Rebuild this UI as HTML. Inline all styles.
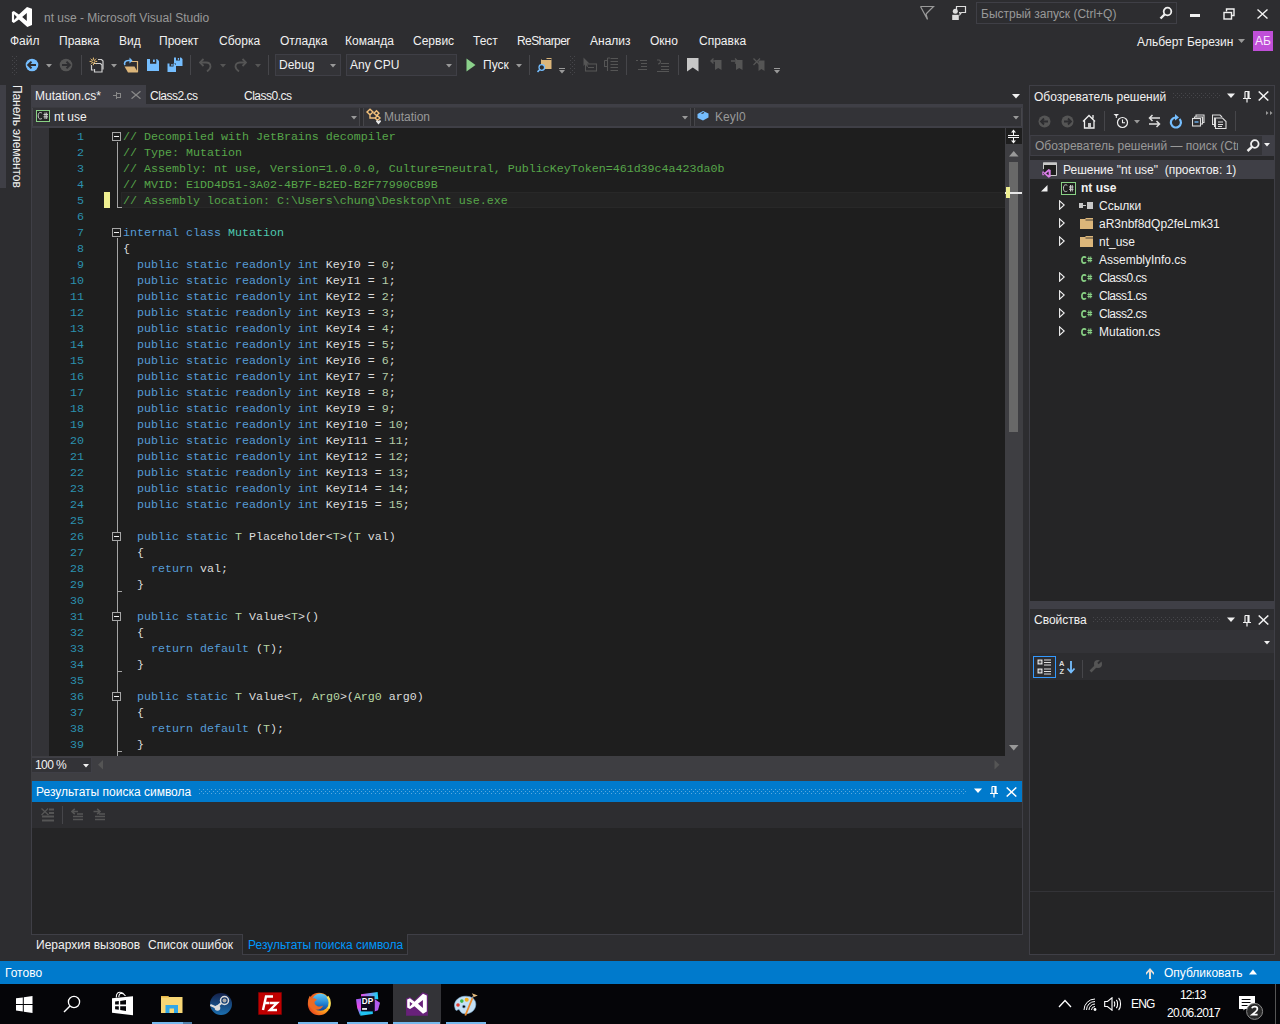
<!DOCTYPE html><html><head><meta charset="utf-8"><style>
*{margin:0;padding:0;box-sizing:border-box}
body{width:1280px;height:1024px;background:#2D2D30;position:relative;overflow:hidden;font-family:"Liberation Sans",sans-serif;font-size:12px;color:#F1F1F1}
body div, body svg{position:absolute}
.m{font-family:"Liberation Mono",monospace}
</style></head><body>
<svg style="left:8px;top:4px" width="28" height="26" viewBox="0 0 28 26"><path fill-rule="evenodd" fill="#fff" d="M19 2.9 L24 4.8 V21.1 L19.3 23 L10.9 15.5 L5.8 18.9 L3.9 17.8 V8.1 L5.8 6.9 L10.9 10.4 Z M14.2 12.9 L18.8 8.9 V17 Z M6.1 10.2 V16 L8.9 13.1 Z"/></svg>
<div style="left:44px;top:10px;color:#999999;font-size:12px;line-height:16px;white-space:pre;">nt use - Microsoft Visual Studio</div>
<svg style="left:919px;top:5px" width="16" height="16" viewBox="0 0 16 16"><path d="M1.5 1.5 H14.5 L7 9 M1.5 1.5 L8.5 14.5 M7 9 L8.5 14.5" stroke="#999" stroke-width="1.2" fill="none"/></svg>
<svg style="left:950px;top:4px" width="18" height="18" viewBox="0 0 18 18"><path d="M6.5 6 V2.5 H15.5 V8.5 H11.5 L10 10.5 V8.5 H9" stroke="#ddd" stroke-width="1.2" fill="none"/><circle cx="5.3" cy="7.3" r="2.5" fill="#ddd"/><rect x="2.2" y="10.8" width="6.6" height="5.2" fill="#ddd"/></svg>
<div style="left:976px;top:2px;width:201px;height:22px;background:#2D2D30;border:1px solid #3F3F46"></div>
<div style="left:981px;top:6px;color:#999999;font-size:12px;line-height:16px;white-space:pre;">Быстрый запуск (Ctrl+Q)</div>
<svg style="left:1159px;top:6px" width="14" height="14" viewBox="0 0 14 14"><circle cx="8.5" cy="5.5" r="3.8" stroke="#eee" stroke-width="1.8" fill="none"/><path d="M6 8 L1.5 12.5" stroke="#eee" stroke-width="2.4"/></svg>
<div style="left:1190px;top:14px;width:10px;height:3px;background:#F1F1F1;"></div>
<svg style="left:1223px;top:8px" width="12" height="12" viewBox="0 0 12 12"><path d="M3.5 3.5 V1 H11 V7.5 H8.5" stroke="#f1f1f1" stroke-width="1.4" fill="none"/><rect x="1" y="4.5" width="7.5" height="6.5" stroke="#f1f1f1" stroke-width="1.4" fill="none"/></svg>
<svg style="left:1257px;top:9px" width="11" height="10" viewBox="0 0 11 10"><path d="M0.5 0.5 L10.5 9.5 M10.5 0.5 L0.5 9.5" stroke="#f1f1f1" stroke-width="1.4"/></svg>
<div style="left:10px;top:33px;color:#F1F1F1;font-size:12px;line-height:16px;white-space:pre;">Файл</div>
<div style="left:59px;top:33px;color:#F1F1F1;font-size:12px;line-height:16px;white-space:pre;">Правка</div>
<div style="left:119px;top:33px;color:#F1F1F1;font-size:12px;line-height:16px;white-space:pre;">Вид</div>
<div style="left:159px;top:33px;color:#F1F1F1;font-size:12px;line-height:16px;white-space:pre;">Проект</div>
<div style="left:219px;top:33px;color:#F1F1F1;font-size:12px;line-height:16px;white-space:pre;">Сборка</div>
<div style="left:280px;top:33px;color:#F1F1F1;font-size:12px;line-height:16px;white-space:pre;">Отладка</div>
<div style="left:345px;top:33px;color:#F1F1F1;font-size:12px;line-height:16px;white-space:pre;">Команда</div>
<div style="left:413px;top:33px;color:#F1F1F1;font-size:12px;line-height:16px;white-space:pre;">Сервис</div>
<div style="left:473px;top:33px;color:#F1F1F1;font-size:12px;line-height:16px;white-space:pre;">Тест</div>
<div style="left:517px;top:33px;color:#F1F1F1;font-size:12px;line-height:16px;white-space:pre;letter-spacing:-0.6px">ReSharper</div>
<div style="left:590px;top:33px;color:#F1F1F1;font-size:12px;line-height:16px;white-space:pre;">Анализ</div>
<div style="left:650px;top:33px;color:#F1F1F1;font-size:12px;line-height:16px;white-space:pre;">Окно</div>
<div style="left:699px;top:33px;color:#F1F1F1;font-size:12px;line-height:16px;white-space:pre;">Справка</div>
<div style="left:1137px;top:34px;color:#F1F1F1;font-size:12px;line-height:16px;white-space:pre;">Альберт Березин</div>
<svg style="left:1238px;top:39px" width="8" height="5"><path d="M0 0 H7 L3.5 4Z" fill="#999"/></svg>
<div style="left:1253px;top:31px;width:20px;height:20px;background:#C04FD8;"></div>
<div style="left:1255px;top:33px;color:#F8E8FC;font-size:12px;line-height:16px;white-space:pre;">АБ</div>
<div style="left:12px;top:56px;width:1px;height:1px;background:#46464A;"></div>
<div style="left:16px;top:56px;width:1px;height:1px;background:#46464A;"></div>
<div style="left:14px;top:58px;width:1px;height:1px;background:#46464A;"></div>
<div style="left:12px;top:60px;width:1px;height:1px;background:#46464A;"></div>
<div style="left:16px;top:60px;width:1px;height:1px;background:#46464A;"></div>
<div style="left:14px;top:62px;width:1px;height:1px;background:#46464A;"></div>
<div style="left:12px;top:64px;width:1px;height:1px;background:#46464A;"></div>
<div style="left:16px;top:64px;width:1px;height:1px;background:#46464A;"></div>
<div style="left:14px;top:66px;width:1px;height:1px;background:#46464A;"></div>
<div style="left:12px;top:68px;width:1px;height:1px;background:#46464A;"></div>
<div style="left:16px;top:68px;width:1px;height:1px;background:#46464A;"></div>
<div style="left:14px;top:70px;width:1px;height:1px;background:#46464A;"></div>
<div style="left:12px;top:72px;width:1px;height:1px;background:#46464A;"></div>
<div style="left:16px;top:72px;width:1px;height:1px;background:#46464A;"></div>
<div style="left:14px;top:74px;width:1px;height:1px;background:#46464A;"></div>
<svg style="left:25px;top:58px" width="14" height="14" viewBox="0 0 14 14"><circle cx="7" cy="7" r="6.3" fill="#75BEFF"/><path d="M3 7 H11 M6.5 3.6 L3.2 7 L6.5 10.4" stroke="#2D2D30" stroke-width="2" fill="none"/></svg>
<svg style="left:46px;top:64px" width="7" height="4"><path d="M0 0 H6 L3 3.5Z" fill="#999"/></svg>
<svg style="left:59px;top:58px" width="14" height="14" viewBox="0 0 14 14"><circle cx="7" cy="7" r="6.3" fill="#555"/><path d="M3 7 H11 M7.5 3.6 L10.8 7 L7.5 10.4" stroke="#2D2D30" stroke-width="2" fill="none"/></svg>
<div style="left:81px;top:55px;width:1px;height:20px;background:#46464A;"></div>
<svg style="left:86px;top:54px" width="20" height="20" viewBox="0 0 20 20"><path d="M12 5.5 H15.5 L17 7 V15.5" stroke="#D0D0D0" stroke-width="1.2" fill="none"/><path d="M8 9.5 H14.5 L16 11 V18 H8.5 V15" stroke="#D0D0D0" stroke-width="1.2" fill="none"/><path d="M5.5 11 V16 H7.5" stroke="#D0D0D0" stroke-width="1.2" fill="none"/><circle cx="7.4" cy="7.4" r="1.6" fill="none" stroke="#F5C878" stroke-width="1"/><path d="M7.4 3.6 V5.2 M7.4 9.6 V11.2 M3.6 7.4 H5.2 M9.6 7.4 H11.2 M4.7 4.7 L5.8 5.8 M9 9 L10.1 10.1 M10.1 4.7 L9 5.8 M5.8 9 L4.7 10.1" stroke="#F5C878" stroke-width="1"/></svg>
<svg style="left:111px;top:64px" width="7" height="4"><path d="M0 0 H6 L3 3.5Z" fill="#999"/></svg>
<svg style="left:122px;top:56px" width="18" height="18" viewBox="0 0 18 18"><path d="M9 5.5 H15.5 V16" stroke="#DCB67A" stroke-width="1.2" fill="none"/><path d="M2.5 10.5 H12.5 L16 16.5 H6 Z" fill="#DCB67A"/><path d="M3 9 C1.8 7 3 4.5 6.5 4.5 H8" stroke="#75BEFF" stroke-width="1.6" fill="none"/><path d="M7.5 1.5 L10.5 4.5 L7.5 7.5Z" fill="#75BEFF"/></svg>
<svg style="left:147px;top:59px" width="13" height="13" viewBox="0 0 13 13"><path fill-rule="evenodd" d="M0 0 H10 L12 2 V12 H0 Z M3 0 V4.8 H9.3 V0 Z" fill="#75BEFF"/><rect x="6" y="0.6" width="1.8" height="2.4" fill="#75BEFF"/></svg>
<svg style="left:167px;top:57px" width="16" height="16" viewBox="0 0 16 16"><path fill-rule="evenodd" d="M7 0.5 H14 L15.5 2 V9 H9 V6.5 H7 Z M9 0.5 V3.5 H13 V0.5 Z" fill="#75BEFF"/><rect x="10.8" y="1" width="1.3" height="1.8" fill="#75BEFF"/><path fill-rule="evenodd" d="M0.5 6.5 H7.5 L9 8 V15 H0.5 Z M2.5 6.5 V9.5 H6.5 V6.5 Z" fill="#75BEFF"/><rect x="4.3" y="7" width="1.3" height="1.8" fill="#75BEFF"/></svg>
<div style="left:190px;top:55px;width:1px;height:20px;background:#46464A;"></div>
<svg style="left:199px;top:58px" width="13" height="14" viewBox="0 0 13 14"><path d="M1.5 4.5 H7 C10 4.5 11.5 6.5 11.5 8.5 C11.5 10.5 10.5 11.5 8 13.5" stroke="#555" stroke-width="1.8" fill="none"/><path d="M4.5 1 L1 4.5 L4.5 8" stroke="#555" stroke-width="1.8" fill="none"/></svg>
<svg style="left:220px;top:64px" width="7" height="4"><path d="M0 0 H6 L3 3.5Z" fill="#555"/></svg>
<svg style="left:234px;top:58px" width="13" height="14" viewBox="0 0 13 14"><path d="M11.5 4.5 H6 C3 4.5 1.5 6.5 1.5 8.5 C1.5 10.5 2.5 11.5 5 13.5" stroke="#555" stroke-width="1.8" fill="none"/><path d="M8.5 1 L12 4.5 L8.5 8" stroke="#555" stroke-width="1.8" fill="none"/></svg>
<svg style="left:255px;top:64px" width="7" height="4"><path d="M0 0 H6 L3 3.5Z" fill="#555"/></svg>
<div style="left:268px;top:55px;width:1px;height:20px;background:#46464A;"></div>
<div style="left:275px;top:54px;width:66px;height:22px;background:#333337;border:1px solid #3F3F46"></div>
<div style="left:279px;top:57px;color:#F1F1F1;font-size:12px;line-height:16px;white-space:pre;">Debug</div>
<svg style="left:330px;top:64px" width="7" height="4"><path d="M0 0 H6 L3 3.5Z" fill="#999"/></svg>
<div style="left:346px;top:54px;width:111px;height:22px;background:#333337;border:1px solid #3F3F46"></div>
<div style="left:350px;top:57px;color:#F1F1F1;font-size:12px;line-height:16px;white-space:pre;">Any CPU</div>
<svg style="left:446px;top:64px" width="7" height="4"><path d="M0 0 H6 L3 3.5Z" fill="#999"/></svg>
<svg style="left:466px;top:58px" width="10" height="14"><path d="M0.5 0.5 L9.5 7 L0.5 13.5Z" fill="#8BD18B"/></svg>
<div style="left:483px;top:57px;color:#F1F1F1;font-size:12px;line-height:16px;white-space:pre;">Пуск</div>
<svg style="left:516px;top:64px" width="7" height="4"><path d="M0 0 H6 L3 3.5Z" fill="#999"/></svg>
<div style="left:529px;top:55px;width:1px;height:20px;background:#46464A;"></div>
<svg style="left:537px;top:57px" width="16" height="17" viewBox="0 0 16 17"><path d="M4 2 H9 L10 1 H14.5 V12 H4 Z" fill="#DCB67A"/><path d="M4.5 2.5 H14.5" stroke="#2D2D30" stroke-width="1"/><circle cx="4.8" cy="10.5" r="2.8" stroke="#75BEFF" stroke-width="1.3" fill="#2D2D30"/><path d="M2.8 12.5 L0.5 15" stroke="#75BEFF" stroke-width="1.6"/></svg>
<div style="left:559px;top:68px;width:6px;height:1px;background:#999;"></div>
<svg style="left:559px;top:70px" width="7" height="4"><path d="M0 0 H6 L3 3.5Z" fill="#999"/></svg>
<div style="left:570px;top:56px;width:1px;height:1px;background:#46464A;"></div>
<div style="left:574px;top:56px;width:1px;height:1px;background:#46464A;"></div>
<div style="left:572px;top:58px;width:1px;height:1px;background:#46464A;"></div>
<div style="left:570px;top:60px;width:1px;height:1px;background:#46464A;"></div>
<div style="left:574px;top:60px;width:1px;height:1px;background:#46464A;"></div>
<div style="left:572px;top:62px;width:1px;height:1px;background:#46464A;"></div>
<div style="left:570px;top:64px;width:1px;height:1px;background:#46464A;"></div>
<div style="left:574px;top:64px;width:1px;height:1px;background:#46464A;"></div>
<div style="left:572px;top:66px;width:1px;height:1px;background:#46464A;"></div>
<div style="left:570px;top:68px;width:1px;height:1px;background:#46464A;"></div>
<div style="left:574px;top:68px;width:1px;height:1px;background:#46464A;"></div>
<div style="left:572px;top:70px;width:1px;height:1px;background:#46464A;"></div>
<div style="left:570px;top:72px;width:1px;height:1px;background:#46464A;"></div>
<div style="left:574px;top:72px;width:1px;height:1px;background:#46464A;"></div>
<div style="left:572px;top:74px;width:1px;height:1px;background:#46464A;"></div>
<svg style="left:583px;top:57px" width="15" height="15" viewBox="0 0 15 15"><path d="M0.5 0.5 V9 L2.5 7 L4 10 L5.2 9.4 L3.8 6.5 H6.5 Z" fill="#555"/><rect x="2.5" y="7" width="11" height="7" stroke="#555" stroke-width="1.1" fill="none"/><path d="M5 10.5 H11" stroke="#555" stroke-width="1.1"/></svg>
<svg style="left:604px;top:57px" width="15" height="15" viewBox="0 0 15 15"><path d="M3.5 1 V14 M0.5 3.5 V9.5 H3 M0.5 3.5 H3 M6.5 1.5 H14 M6.5 4.5 H14 M6.5 7.5 H14 M6.5 10.5 H14 M6.5 13.5 H14 M3.5 1 H6" stroke="#555" stroke-width="1.1" fill="none"/></svg>
<div style="left:626px;top:55px;width:1px;height:20px;background:#46464A;"></div>
<svg style="left:636px;top:59px" width="12" height="12" viewBox="0 0 12 12"><path d="M0 1.5 H2 M4 1.5 H11 M5 4.5 H11 M5 7.5 H11 M2 10.5 H11" stroke="#555" stroke-width="1.1"/></svg>
<svg style="left:656px;top:58px" width="14" height="14" viewBox="0 0 14 14"><path d="M1 2 H3 C5 2 5 6 2 6 M5 5.5 H13 M5 8.5 H13 M5 11.5 H13 M1 13.5 H13" stroke="#555" stroke-width="1.2" fill="none"/></svg>
<div style="left:678px;top:55px;width:1px;height:20px;background:#46464A;"></div>
<svg style="left:687px;top:58px" width="12" height="14" viewBox="0 0 12 14"><path d="M0 0 H11.5 V13.5 L5.75 9.5 L0 13.5 Z" fill="#C8C8C8"/></svg>
<svg style="left:710px;top:58px" width="12" height="14" viewBox="0 0 12 14"><path d="M5 2 H11.5 V12 L8.2 10 L5 12 Z" fill="#555"/><path d="M0.5 3 H7 M3.5 0.5 L1 3 L3.5 5.5" stroke="#555" stroke-width="1.3" fill="none"/></svg>
<svg style="left:731px;top:58px" width="12" height="14" viewBox="0 0 12 14"><path d="M5 2 H11.5 V12 L8.2 10 L5 12 Z" fill="#555"/><path d="M0 3 H6.5 M4 0.5 L6.5 3 L4 5.5" stroke="#555" stroke-width="1.3" fill="none"/></svg>
<svg style="left:753px;top:58px" width="12" height="14" viewBox="0 0 12 14"><path d="M5.5 2.5 H11.5 V13 L8.5 11 L5.5 13 Z" fill="#555"/><path d="M0.5 0.5 L7 7 M7 0.5 L0.5 7" stroke="#555" stroke-width="1.3"/></svg>
<div style="left:774px;top:68px;width:6px;height:1px;background:#999;"></div>
<svg style="left:774px;top:70px" width="7" height="4"><path d="M0 0 H6 L3 3.5Z" fill="#999"/></svg>
<div style="left:0px;top:85px;width:6px;height:103px;background:#3F3F46;"></div>
<div style="left:9px;top:85px;width:16px;height:102px;"><div style="left:0;top:0;width:102px;height:16px;line-height:16px;transform-origin:0 0;transform:translate(16px,0) rotate(90deg);white-space:nowrap;letter-spacing:-0.1px;color:#F1F1F1">Панель элементов</div></div>
<div style="left:31px;top:104px;width:1px;height:831px;background:#3F3F46;"></div>
<div style="left:31px;top:85px;width:115px;height:19px;background:#3F3F46;"></div>
<div style="left:35px;top:88px;color:#F1F1F1;font-size:12px;line-height:16px;white-space:pre;">Mutation.cs*</div>
<div style="left:113px;top:95px;width:3px;height:1px;background:#888;"></div>
<div style="left:116px;top:92px;width:1px;height:7px;background:#888;"></div>
<div style="left:117px;top:93px;width:4px;height:1px;background:#888;"></div>
<div style="left:117px;top:97px;width:4px;height:1px;background:#888;"></div>
<div style="left:120px;top:93px;width:1px;height:5px;background:#888;"></div>
<svg style="left:131px;top:91px" width="10" height="8" viewBox="0 0 10 8"><path d="M0.5 0.3 L9.5 7.7 M9.5 0.3 L0.5 7.7" stroke="#888" stroke-width="1.3"/></svg>
<div style="left:150px;top:88px;color:#F1F1F1;font-size:12px;line-height:16px;white-space:pre;letter-spacing:-0.5px">Class2.cs</div>
<div style="left:244px;top:88px;color:#F1F1F1;font-size:12px;line-height:16px;white-space:pre;letter-spacing:-0.5px">Class0.cs</div>
<svg style="left:1012px;top:94px" width="9" height="5"><path d="M0 0 H8 L4 4.5Z" fill="#F1F1F1"/></svg>
<div style="left:31px;top:104px;width:992px;height:24px;background:#3F3F46;"></div>
<div style="left:32px;top:107px;width:328px;height:19px;background:#333337;"></div>
<div style="left:363px;top:107px;width:328px;height:19px;background:#333337;"></div>
<div style="left:694px;top:107px;width:328px;height:19px;background:#333337;"></div>
<div style="left:359px;top:107px;width:1px;height:19px;background:#46464A;"></div>
<div style="left:360px;top:107px;width:3px;height:19px;background:#2D2D30;"></div>
<div style="left:363px;top:107px;width:1px;height:19px;background:#46464A;"></div>
<div style="left:690px;top:107px;width:1px;height:19px;background:#46464A;"></div>
<div style="left:691px;top:107px;width:3px;height:19px;background:#2D2D30;"></div>
<div style="left:694px;top:107px;width:1px;height:19px;background:#46464A;"></div>
<div style="left:1021px;top:107px;width:1px;height:19px;background:#46464A;"></div>
<div style="left:32px;top:107px;width:1px;height:19px;background:#46464A;"></div>
<div style="left:32px;top:107px;width:990px;height:1px;background:#3A3A3F;"></div>
<svg style="left:36px;top:110px" width="14" height="12" viewBox="0 0 14 12"><rect x="0.5" y="0.5" width="13" height="11" stroke="#89D185" fill="#252526"/><path d="M6 3.2 C5.5 2.7 5 2.5 4.3 2.5 C3 2.5 2.2 3.6 2.2 5.8 C2.2 8 3 9 4.3 9 C5 9 5.5 8.8 6 8.4" stroke="#ccc" stroke-width="1" fill="none"/><path d="M7.5 4.5 H12 M7.5 6.8 H12 M9 2.5 V9 M10.7 2.5 V9" stroke="#ccc" stroke-width="1"/></svg>
<div style="left:54px;top:109px;color:#F1F1F1;font-size:12px;line-height:16px;white-space:pre;">nt use</div>
<svg style="left:351px;top:116px" width="7" height="4"><path d="M0 0 H6 L3 3.5Z" fill="#999"/></svg>
<svg style="left:365px;top:108px" width="18" height="17" viewBox="0 0 18 17"><path d="M2 4 L5 1.2 L8 4 L5 6.8Z M9 5.2 L11.5 2.8 L14 5.2 L11.5 7.6Z M10 10 L12.5 7.8 L15 10 L12.5 12.2Z M5 6.8 V10 H10" stroke="#F2C07A" stroke-width="1.4" fill="#333337"/><path d="M11 13.5 C11 12 12.8 11.8 13.5 13 C14.2 11.8 16 12 16 13.5 L13.5 16.5Z" fill="#E8E8E8"/></svg>
<div style="left:384px;top:109px;color:#999999;font-size:12px;line-height:16px;white-space:pre;">Mutation</div>
<svg style="left:682px;top:116px" width="7" height="4"><path d="M0 0 H6 L3 3.5Z" fill="#999"/></svg>
<svg style="left:697px;top:110px" width="12" height="11" viewBox="0 0 12 11"><path d="M0.5 4 L6 1 L11.5 3.5 V7.5 L6 10.5 L0.5 8 Z" fill="#75BEFF"/><path d="M4.5 3.5 L7 2.5" stroke="#2D2D30" stroke-width="1.3"/></svg>
<div style="left:715px;top:109px;color:#999999;font-size:12px;line-height:16px;white-space:pre;">KeyI0</div>
<svg style="left:1013px;top:116px" width="7" height="4"><path d="M0 0 H6 L3 3.5Z" fill="#999"/></svg>
<div style="left:32px;top:128px;width:17px;height:628px;background:#333337;"></div>
<div style="left:49px;top:128px;width:956px;height:628px;background:#1E1E1E;"></div>
<div style="left:121px;top:192px;width:884px;height:16px;background:#232323;border:1px solid #282828;border-right:none"></div>
<div style="left:104px;top:192px;width:6px;height:16px;background:#EFEF91;"></div>
<div class="m" style="left:49px;top:128px;width:956px;height:628px;overflow:hidden;font-size:11.67px;line-height:16px"><div style="left:0;top:1px;width:956px;height:640px">
<div style="left:0;top:0px;width:35px;text-align:right;color:#2B91AF">1</div>
<div style="left:74px;top:0px;white-space:pre"><span style="color:#57A64A">// Decompiled with JetBrains decompiler</span></div>
<div style="left:0;top:16px;width:35px;text-align:right;color:#2B91AF">2</div>
<div style="left:74px;top:16px;white-space:pre"><span style="color:#57A64A">// Type: Mutation</span></div>
<div style="left:0;top:32px;width:35px;text-align:right;color:#2B91AF">3</div>
<div style="left:74px;top:32px;white-space:pre"><span style="color:#57A64A">// Assembly: nt use, Version=1.0.0.0, Culture=neutral, PublicKeyToken=461d39c4a423da0b</span></div>
<div style="left:0;top:48px;width:35px;text-align:right;color:#2B91AF">4</div>
<div style="left:74px;top:48px;white-space:pre"><span style="color:#57A64A">// MVID: E1DD4D51-3A02-4B7F-B2ED-B2F77990CB9B</span></div>
<div style="left:0;top:64px;width:35px;text-align:right;color:#2B91AF">5</div>
<div style="left:74px;top:64px;white-space:pre"><span style="color:#57A64A">// Assembly location: C:\Users\chung\Desktop\nt use.exe</span></div>
<div style="left:0;top:80px;width:35px;text-align:right;color:#2B91AF">6</div>
<div style="left:0;top:96px;width:35px;text-align:right;color:#2B91AF">7</div>
<div style="left:74px;top:96px;white-space:pre"><span style="color:#569CD6">internal class </span><span style="color:#4EC9B0">Mutation</span></div>
<div style="left:0;top:112px;width:35px;text-align:right;color:#2B91AF">8</div>
<div style="left:74px;top:112px;white-space:pre"><span style="color:#DCDCDC">{</span></div>
<div style="left:0;top:128px;width:35px;text-align:right;color:#2B91AF">9</div>
<div style="left:74px;top:128px;white-space:pre"><span style="color:#569CD6">  public static readonly int </span><span style="color:#DCDCDC">KeyI0 = </span><span style="color:#B5CEA8">0</span><span style="color:#DCDCDC">;</span></div>
<div style="left:0;top:144px;width:35px;text-align:right;color:#2B91AF">10</div>
<div style="left:74px;top:144px;white-space:pre"><span style="color:#569CD6">  public static readonly int </span><span style="color:#DCDCDC">KeyI1 = </span><span style="color:#B5CEA8">1</span><span style="color:#DCDCDC">;</span></div>
<div style="left:0;top:160px;width:35px;text-align:right;color:#2B91AF">11</div>
<div style="left:74px;top:160px;white-space:pre"><span style="color:#569CD6">  public static readonly int </span><span style="color:#DCDCDC">KeyI2 = </span><span style="color:#B5CEA8">2</span><span style="color:#DCDCDC">;</span></div>
<div style="left:0;top:176px;width:35px;text-align:right;color:#2B91AF">12</div>
<div style="left:74px;top:176px;white-space:pre"><span style="color:#569CD6">  public static readonly int </span><span style="color:#DCDCDC">KeyI3 = </span><span style="color:#B5CEA8">3</span><span style="color:#DCDCDC">;</span></div>
<div style="left:0;top:192px;width:35px;text-align:right;color:#2B91AF">13</div>
<div style="left:74px;top:192px;white-space:pre"><span style="color:#569CD6">  public static readonly int </span><span style="color:#DCDCDC">KeyI4 = </span><span style="color:#B5CEA8">4</span><span style="color:#DCDCDC">;</span></div>
<div style="left:0;top:208px;width:35px;text-align:right;color:#2B91AF">14</div>
<div style="left:74px;top:208px;white-space:pre"><span style="color:#569CD6">  public static readonly int </span><span style="color:#DCDCDC">KeyI5 = </span><span style="color:#B5CEA8">5</span><span style="color:#DCDCDC">;</span></div>
<div style="left:0;top:224px;width:35px;text-align:right;color:#2B91AF">15</div>
<div style="left:74px;top:224px;white-space:pre"><span style="color:#569CD6">  public static readonly int </span><span style="color:#DCDCDC">KeyI6 = </span><span style="color:#B5CEA8">6</span><span style="color:#DCDCDC">;</span></div>
<div style="left:0;top:240px;width:35px;text-align:right;color:#2B91AF">16</div>
<div style="left:74px;top:240px;white-space:pre"><span style="color:#569CD6">  public static readonly int </span><span style="color:#DCDCDC">KeyI7 = </span><span style="color:#B5CEA8">7</span><span style="color:#DCDCDC">;</span></div>
<div style="left:0;top:256px;width:35px;text-align:right;color:#2B91AF">17</div>
<div style="left:74px;top:256px;white-space:pre"><span style="color:#569CD6">  public static readonly int </span><span style="color:#DCDCDC">KeyI8 = </span><span style="color:#B5CEA8">8</span><span style="color:#DCDCDC">;</span></div>
<div style="left:0;top:272px;width:35px;text-align:right;color:#2B91AF">18</div>
<div style="left:74px;top:272px;white-space:pre"><span style="color:#569CD6">  public static readonly int </span><span style="color:#DCDCDC">KeyI9 = </span><span style="color:#B5CEA8">9</span><span style="color:#DCDCDC">;</span></div>
<div style="left:0;top:288px;width:35px;text-align:right;color:#2B91AF">19</div>
<div style="left:74px;top:288px;white-space:pre"><span style="color:#569CD6">  public static readonly int </span><span style="color:#DCDCDC">KeyI10 = </span><span style="color:#B5CEA8">10</span><span style="color:#DCDCDC">;</span></div>
<div style="left:0;top:304px;width:35px;text-align:right;color:#2B91AF">20</div>
<div style="left:74px;top:304px;white-space:pre"><span style="color:#569CD6">  public static readonly int </span><span style="color:#DCDCDC">KeyI11 = </span><span style="color:#B5CEA8">11</span><span style="color:#DCDCDC">;</span></div>
<div style="left:0;top:320px;width:35px;text-align:right;color:#2B91AF">21</div>
<div style="left:74px;top:320px;white-space:pre"><span style="color:#569CD6">  public static readonly int </span><span style="color:#DCDCDC">KeyI12 = </span><span style="color:#B5CEA8">12</span><span style="color:#DCDCDC">;</span></div>
<div style="left:0;top:336px;width:35px;text-align:right;color:#2B91AF">22</div>
<div style="left:74px;top:336px;white-space:pre"><span style="color:#569CD6">  public static readonly int </span><span style="color:#DCDCDC">KeyI13 = </span><span style="color:#B5CEA8">13</span><span style="color:#DCDCDC">;</span></div>
<div style="left:0;top:352px;width:35px;text-align:right;color:#2B91AF">23</div>
<div style="left:74px;top:352px;white-space:pre"><span style="color:#569CD6">  public static readonly int </span><span style="color:#DCDCDC">KeyI14 = </span><span style="color:#B5CEA8">14</span><span style="color:#DCDCDC">;</span></div>
<div style="left:0;top:368px;width:35px;text-align:right;color:#2B91AF">24</div>
<div style="left:74px;top:368px;white-space:pre"><span style="color:#569CD6">  public static readonly int </span><span style="color:#DCDCDC">KeyI15 = </span><span style="color:#B5CEA8">15</span><span style="color:#DCDCDC">;</span></div>
<div style="left:0;top:384px;width:35px;text-align:right;color:#2B91AF">25</div>
<div style="left:0;top:400px;width:35px;text-align:right;color:#2B91AF">26</div>
<div style="left:74px;top:400px;white-space:pre"><span style="color:#569CD6">  public static </span><span style="color:#B8D7A3">T</span><span style="color:#DCDCDC"> Placeholder&lt;</span><span style="color:#B8D7A3">T</span><span style="color:#DCDCDC">&gt;(</span><span style="color:#B8D7A3">T</span><span style="color:#DCDCDC"> val)</span></div>
<div style="left:0;top:416px;width:35px;text-align:right;color:#2B91AF">27</div>
<div style="left:74px;top:416px;white-space:pre"><span style="color:#DCDCDC">  {</span></div>
<div style="left:0;top:432px;width:35px;text-align:right;color:#2B91AF">28</div>
<div style="left:74px;top:432px;white-space:pre"><span style="color:#569CD6">    return </span><span style="color:#DCDCDC">val;</span></div>
<div style="left:0;top:448px;width:35px;text-align:right;color:#2B91AF">29</div>
<div style="left:74px;top:448px;white-space:pre"><span style="color:#DCDCDC">  }</span></div>
<div style="left:0;top:464px;width:35px;text-align:right;color:#2B91AF">30</div>
<div style="left:0;top:480px;width:35px;text-align:right;color:#2B91AF">31</div>
<div style="left:74px;top:480px;white-space:pre"><span style="color:#569CD6">  public static </span><span style="color:#B8D7A3">T</span><span style="color:#DCDCDC"> Value&lt;</span><span style="color:#B8D7A3">T</span><span style="color:#DCDCDC">&gt;()</span></div>
<div style="left:0;top:496px;width:35px;text-align:right;color:#2B91AF">32</div>
<div style="left:74px;top:496px;white-space:pre"><span style="color:#DCDCDC">  {</span></div>
<div style="left:0;top:512px;width:35px;text-align:right;color:#2B91AF">33</div>
<div style="left:74px;top:512px;white-space:pre"><span style="color:#569CD6">    return default </span><span style="color:#DCDCDC">(</span><span style="color:#B8D7A3">T</span><span style="color:#DCDCDC">);</span></div>
<div style="left:0;top:528px;width:35px;text-align:right;color:#2B91AF">34</div>
<div style="left:74px;top:528px;white-space:pre"><span style="color:#DCDCDC">  }</span></div>
<div style="left:0;top:544px;width:35px;text-align:right;color:#2B91AF">35</div>
<div style="left:0;top:560px;width:35px;text-align:right;color:#2B91AF">36</div>
<div style="left:74px;top:560px;white-space:pre"><span style="color:#569CD6">  public static </span><span style="color:#B8D7A3">T</span><span style="color:#DCDCDC"> Value&lt;</span><span style="color:#B8D7A3">T</span><span style="color:#DCDCDC">, </span><span style="color:#B8D7A3">Arg0</span><span style="color:#DCDCDC">&gt;(</span><span style="color:#B8D7A3">Arg0</span><span style="color:#DCDCDC"> arg0)</span></div>
<div style="left:0;top:576px;width:35px;text-align:right;color:#2B91AF">37</div>
<div style="left:74px;top:576px;white-space:pre"><span style="color:#DCDCDC">  {</span></div>
<div style="left:0;top:592px;width:35px;text-align:right;color:#2B91AF">38</div>
<div style="left:74px;top:592px;white-space:pre"><span style="color:#569CD6">    return default </span><span style="color:#DCDCDC">(</span><span style="color:#B8D7A3">T</span><span style="color:#DCDCDC">);</span></div>
<div style="left:0;top:608px;width:35px;text-align:right;color:#2B91AF">39</div>
<div style="left:74px;top:608px;white-space:pre"><span style="color:#DCDCDC">  }</span></div>
</div></div>
<div style="left:112px;top:132px;width:9px;height:9px;background:#1E1E1E;border:1px solid #A5A5A5"></div>
<div style="left:114px;top:136px;width:5px;height:1px;background:#F1F1F1;"></div>
<div style="left:117px;top:142px;width:1px;height:66px;background:#A5A5A5;"></div>
<div style="left:117px;top:207px;width:5px;height:1px;background:#A5A5A5;"></div>
<div style="left:112px;top:228px;width:9px;height:9px;background:#1E1E1E;border:1px solid #A5A5A5"></div>
<div style="left:114px;top:232px;width:5px;height:1px;background:#F1F1F1;"></div>
<div style="left:117px;top:238px;width:1px;height:518px;background:#A5A5A5;"></div>
<div style="left:112px;top:532px;width:9px;height:9px;background:#1E1E1E;border:1px solid #A5A5A5"></div>
<div style="left:114px;top:536px;width:5px;height:1px;background:#F1F1F1;"></div>
<div style="left:117px;top:542px;width:1px;height:50px;background:#A5A5A5;"></div>
<div style="left:117px;top:591px;width:5px;height:1px;background:#A5A5A5;"></div>
<div style="left:112px;top:612px;width:9px;height:9px;background:#1E1E1E;border:1px solid #A5A5A5"></div>
<div style="left:114px;top:616px;width:5px;height:1px;background:#F1F1F1;"></div>
<div style="left:117px;top:622px;width:1px;height:50px;background:#A5A5A5;"></div>
<div style="left:117px;top:671px;width:5px;height:1px;background:#A5A5A5;"></div>
<div style="left:112px;top:692px;width:9px;height:9px;background:#1E1E1E;border:1px solid #A5A5A5"></div>
<div style="left:114px;top:696px;width:5px;height:1px;background:#F1F1F1;"></div>
<div style="left:117px;top:702px;width:1px;height:50px;background:#A5A5A5;"></div>
<div style="left:117px;top:751px;width:5px;height:1px;background:#A5A5A5;"></div>
<div style="left:1005px;top:128px;width:18px;height:628px;background:#3E3E42;"></div>
<div style="left:1006px;top:128px;width:16px;height:16px;background:#1E1E1E;"></div>
<div style="left:1008px;top:135px;width:11px;height:1px;background:#F4F4F4;"></div>
<div style="left:1008px;top:137px;width:11px;height:1px;background:#F4F4F4;"></div>
<div style="left:1013px;top:131px;width:1px;height:4px;background:#F4F4F4;"></div>
<div style="left:1013px;top:138px;width:1px;height:4px;background:#F4F4F4;"></div>
<svg style="left:1010px;top:129px" width="7" height="15" viewBox="0 0 7 15"><path d="M3.5 0.5 L6 3.5 H1 Z M3.5 14.5 L6 11.5 H1 Z" fill="#F4F4F4"/></svg>
<svg style="left:1009px;top:151px" width="10" height="6"><path d="M0 5.5 H9.5 L4.75 0Z" fill="#999"/></svg>
<div style="left:1009px;top:162px;width:9px;height:270px;background:#686868;"></div>
<svg style="left:1009px;top:745px" width="10" height="6"><path d="M0 0 H9.5 L4.75 5.5Z" fill="#999"/></svg>
<div style="left:1005px;top:192px;width:17px;height:2px;background:#E8E8E8;"></div>
<div style="left:1006px;top:187px;width:4px;height:11px;background:#EFEF91;"></div>
<div style="left:31px;top:756px;width:992px;height:25px;background:#3E3E42;"></div>
<div style="left:32px;top:757px;width:60px;height:16px;background:#333337;border:1px solid #3F3F46;border-left:none"></div>
<div style="left:35px;top:758px;color:#F1F1F1;font-size:12px;line-height:15px;white-space:pre;letter-spacing:-0.6px">100 %</div>
<svg style="left:83px;top:764px" width="7" height="4"><path d="M0 0 H6 L3 3.5Z" fill="#F1F1F1"/></svg>
<svg style="left:40px;top:760px" width="6" height="10"></svg>
<svg style="left:98px;top:760px" width="6" height="10"><path d="M5 0 V9.5 L0 4.75Z" fill="#555"/></svg>
<svg style="left:994px;top:760px" width="6" height="10"><path d="M0.5 0 V9.5 L5.5 4.75Z" fill="#555"/></svg>
<div style="left:32px;top:781px;width:991px;height:21px;background:#007ACC;"></div>
<div style="left:36px;top:784px;color:#FFFFFF;font-size:12px;line-height:16px;white-space:pre;">Результаты поиска символа</div>
<svg style="left:0;top:0" width="1280" height="1024"><path fill="#59A8DE" d="M199 789h1v1h-1z M199 793h1v1h-1z M201 791h1v1h-1z M203 789h1v1h-1z M203 793h1v1h-1z M205 791h1v1h-1z M207 789h1v1h-1z M207 793h1v1h-1z M209 791h1v1h-1z M211 789h1v1h-1z M211 793h1v1h-1z M213 791h1v1h-1z M215 789h1v1h-1z M215 793h1v1h-1z M217 791h1v1h-1z M219 789h1v1h-1z M219 793h1v1h-1z M221 791h1v1h-1z M223 789h1v1h-1z M223 793h1v1h-1z M225 791h1v1h-1z M227 789h1v1h-1z M227 793h1v1h-1z M229 791h1v1h-1z M231 789h1v1h-1z M231 793h1v1h-1z M233 791h1v1h-1z M235 789h1v1h-1z M235 793h1v1h-1z M237 791h1v1h-1z M239 789h1v1h-1z M239 793h1v1h-1z M241 791h1v1h-1z M243 789h1v1h-1z M243 793h1v1h-1z M245 791h1v1h-1z M247 789h1v1h-1z M247 793h1v1h-1z M249 791h1v1h-1z M251 789h1v1h-1z M251 793h1v1h-1z M253 791h1v1h-1z M255 789h1v1h-1z M255 793h1v1h-1z M257 791h1v1h-1z M259 789h1v1h-1z M259 793h1v1h-1z M261 791h1v1h-1z M263 789h1v1h-1z M263 793h1v1h-1z M265 791h1v1h-1z M267 789h1v1h-1z M267 793h1v1h-1z M269 791h1v1h-1z M271 789h1v1h-1z M271 793h1v1h-1z M273 791h1v1h-1z M275 789h1v1h-1z M275 793h1v1h-1z M277 791h1v1h-1z M279 789h1v1h-1z M279 793h1v1h-1z M281 791h1v1h-1z M283 789h1v1h-1z M283 793h1v1h-1z M285 791h1v1h-1z M287 789h1v1h-1z M287 793h1v1h-1z M289 791h1v1h-1z M291 789h1v1h-1z M291 793h1v1h-1z M293 791h1v1h-1z M295 789h1v1h-1z M295 793h1v1h-1z M297 791h1v1h-1z M299 789h1v1h-1z M299 793h1v1h-1z M301 791h1v1h-1z M303 789h1v1h-1z M303 793h1v1h-1z M305 791h1v1h-1z M307 789h1v1h-1z M307 793h1v1h-1z M309 791h1v1h-1z M311 789h1v1h-1z M311 793h1v1h-1z M313 791h1v1h-1z M315 789h1v1h-1z M315 793h1v1h-1z M317 791h1v1h-1z M319 789h1v1h-1z M319 793h1v1h-1z M321 791h1v1h-1z M323 789h1v1h-1z M323 793h1v1h-1z M325 791h1v1h-1z M327 789h1v1h-1z M327 793h1v1h-1z M329 791h1v1h-1z M331 789h1v1h-1z M331 793h1v1h-1z M333 791h1v1h-1z M335 789h1v1h-1z M335 793h1v1h-1z M337 791h1v1h-1z M339 789h1v1h-1z M339 793h1v1h-1z M341 791h1v1h-1z M343 789h1v1h-1z M343 793h1v1h-1z M345 791h1v1h-1z M347 789h1v1h-1z M347 793h1v1h-1z M349 791h1v1h-1z M351 789h1v1h-1z M351 793h1v1h-1z M353 791h1v1h-1z M355 789h1v1h-1z M355 793h1v1h-1z M357 791h1v1h-1z M359 789h1v1h-1z M359 793h1v1h-1z M361 791h1v1h-1z M363 789h1v1h-1z M363 793h1v1h-1z M365 791h1v1h-1z M367 789h1v1h-1z M367 793h1v1h-1z M369 791h1v1h-1z M371 789h1v1h-1z M371 793h1v1h-1z M373 791h1v1h-1z M375 789h1v1h-1z M375 793h1v1h-1z M377 791h1v1h-1z M379 789h1v1h-1z M379 793h1v1h-1z M381 791h1v1h-1z M383 789h1v1h-1z M383 793h1v1h-1z M385 791h1v1h-1z M387 789h1v1h-1z M387 793h1v1h-1z M389 791h1v1h-1z M391 789h1v1h-1z M391 793h1v1h-1z M393 791h1v1h-1z M395 789h1v1h-1z M395 793h1v1h-1z M397 791h1v1h-1z M399 789h1v1h-1z M399 793h1v1h-1z M401 791h1v1h-1z M403 789h1v1h-1z M403 793h1v1h-1z M405 791h1v1h-1z M407 789h1v1h-1z M407 793h1v1h-1z M409 791h1v1h-1z M411 789h1v1h-1z M411 793h1v1h-1z M413 791h1v1h-1z M415 789h1v1h-1z M415 793h1v1h-1z M417 791h1v1h-1z M419 789h1v1h-1z M419 793h1v1h-1z M421 791h1v1h-1z M423 789h1v1h-1z M423 793h1v1h-1z M425 791h1v1h-1z M427 789h1v1h-1z M427 793h1v1h-1z M429 791h1v1h-1z M431 789h1v1h-1z M431 793h1v1h-1z M433 791h1v1h-1z M435 789h1v1h-1z M435 793h1v1h-1z M437 791h1v1h-1z M439 789h1v1h-1z M439 793h1v1h-1z M441 791h1v1h-1z M443 789h1v1h-1z M443 793h1v1h-1z M445 791h1v1h-1z M447 789h1v1h-1z M447 793h1v1h-1z M449 791h1v1h-1z M451 789h1v1h-1z M451 793h1v1h-1z M453 791h1v1h-1z M455 789h1v1h-1z M455 793h1v1h-1z M457 791h1v1h-1z M459 789h1v1h-1z M459 793h1v1h-1z M461 791h1v1h-1z M463 789h1v1h-1z M463 793h1v1h-1z M465 791h1v1h-1z M467 789h1v1h-1z M467 793h1v1h-1z M469 791h1v1h-1z M471 789h1v1h-1z M471 793h1v1h-1z M473 791h1v1h-1z M475 789h1v1h-1z M475 793h1v1h-1z M477 791h1v1h-1z M479 789h1v1h-1z M479 793h1v1h-1z M481 791h1v1h-1z M483 789h1v1h-1z M483 793h1v1h-1z M485 791h1v1h-1z M487 789h1v1h-1z M487 793h1v1h-1z M489 791h1v1h-1z M491 789h1v1h-1z M491 793h1v1h-1z M493 791h1v1h-1z M495 789h1v1h-1z M495 793h1v1h-1z M497 791h1v1h-1z M499 789h1v1h-1z M499 793h1v1h-1z M501 791h1v1h-1z M503 789h1v1h-1z M503 793h1v1h-1z M505 791h1v1h-1z M507 789h1v1h-1z M507 793h1v1h-1z M509 791h1v1h-1z M511 789h1v1h-1z M511 793h1v1h-1z M513 791h1v1h-1z M515 789h1v1h-1z M515 793h1v1h-1z M517 791h1v1h-1z M519 789h1v1h-1z M519 793h1v1h-1z M521 791h1v1h-1z M523 789h1v1h-1z M523 793h1v1h-1z M525 791h1v1h-1z M527 789h1v1h-1z M527 793h1v1h-1z M529 791h1v1h-1z M531 789h1v1h-1z M531 793h1v1h-1z M533 791h1v1h-1z M535 789h1v1h-1z M535 793h1v1h-1z M537 791h1v1h-1z M539 789h1v1h-1z M539 793h1v1h-1z M541 791h1v1h-1z M543 789h1v1h-1z M543 793h1v1h-1z M545 791h1v1h-1z M547 789h1v1h-1z M547 793h1v1h-1z M549 791h1v1h-1z M551 789h1v1h-1z M551 793h1v1h-1z M553 791h1v1h-1z M555 789h1v1h-1z M555 793h1v1h-1z M557 791h1v1h-1z M559 789h1v1h-1z M559 793h1v1h-1z M561 791h1v1h-1z M563 789h1v1h-1z M563 793h1v1h-1z M565 791h1v1h-1z M567 789h1v1h-1z M567 793h1v1h-1z M569 791h1v1h-1z M571 789h1v1h-1z M571 793h1v1h-1z M573 791h1v1h-1z M575 789h1v1h-1z M575 793h1v1h-1z M577 791h1v1h-1z M579 789h1v1h-1z M579 793h1v1h-1z M581 791h1v1h-1z M583 789h1v1h-1z M583 793h1v1h-1z M585 791h1v1h-1z M587 789h1v1h-1z M587 793h1v1h-1z M589 791h1v1h-1z M591 789h1v1h-1z M591 793h1v1h-1z M593 791h1v1h-1z M595 789h1v1h-1z M595 793h1v1h-1z M597 791h1v1h-1z M599 789h1v1h-1z M599 793h1v1h-1z M601 791h1v1h-1z M603 789h1v1h-1z M603 793h1v1h-1z M605 791h1v1h-1z M607 789h1v1h-1z M607 793h1v1h-1z M609 791h1v1h-1z M611 789h1v1h-1z M611 793h1v1h-1z M613 791h1v1h-1z M615 789h1v1h-1z M615 793h1v1h-1z M617 791h1v1h-1z M619 789h1v1h-1z M619 793h1v1h-1z M621 791h1v1h-1z M623 789h1v1h-1z M623 793h1v1h-1z M625 791h1v1h-1z M627 789h1v1h-1z M627 793h1v1h-1z M629 791h1v1h-1z M631 789h1v1h-1z M631 793h1v1h-1z M633 791h1v1h-1z M635 789h1v1h-1z M635 793h1v1h-1z M637 791h1v1h-1z M639 789h1v1h-1z M639 793h1v1h-1z M641 791h1v1h-1z M643 789h1v1h-1z M643 793h1v1h-1z M645 791h1v1h-1z M647 789h1v1h-1z M647 793h1v1h-1z M649 791h1v1h-1z M651 789h1v1h-1z M651 793h1v1h-1z M653 791h1v1h-1z M655 789h1v1h-1z M655 793h1v1h-1z M657 791h1v1h-1z M659 789h1v1h-1z M659 793h1v1h-1z M661 791h1v1h-1z M663 789h1v1h-1z M663 793h1v1h-1z M665 791h1v1h-1z M667 789h1v1h-1z M667 793h1v1h-1z M669 791h1v1h-1z M671 789h1v1h-1z M671 793h1v1h-1z M673 791h1v1h-1z M675 789h1v1h-1z M675 793h1v1h-1z M677 791h1v1h-1z M679 789h1v1h-1z M679 793h1v1h-1z M681 791h1v1h-1z M683 789h1v1h-1z M683 793h1v1h-1z M685 791h1v1h-1z M687 789h1v1h-1z M687 793h1v1h-1z M689 791h1v1h-1z M691 789h1v1h-1z M691 793h1v1h-1z M693 791h1v1h-1z M695 789h1v1h-1z M695 793h1v1h-1z M697 791h1v1h-1z M699 789h1v1h-1z M699 793h1v1h-1z M701 791h1v1h-1z M703 789h1v1h-1z M703 793h1v1h-1z M705 791h1v1h-1z M707 789h1v1h-1z M707 793h1v1h-1z M709 791h1v1h-1z M711 789h1v1h-1z M711 793h1v1h-1z M713 791h1v1h-1z M715 789h1v1h-1z M715 793h1v1h-1z M717 791h1v1h-1z M719 789h1v1h-1z M719 793h1v1h-1z M721 791h1v1h-1z M723 789h1v1h-1z M723 793h1v1h-1z M725 791h1v1h-1z M727 789h1v1h-1z M727 793h1v1h-1z M729 791h1v1h-1z M731 789h1v1h-1z M731 793h1v1h-1z M733 791h1v1h-1z M735 789h1v1h-1z M735 793h1v1h-1z M737 791h1v1h-1z M739 789h1v1h-1z M739 793h1v1h-1z M741 791h1v1h-1z M743 789h1v1h-1z M743 793h1v1h-1z M745 791h1v1h-1z M747 789h1v1h-1z M747 793h1v1h-1z M749 791h1v1h-1z M751 789h1v1h-1z M751 793h1v1h-1z M753 791h1v1h-1z M755 789h1v1h-1z M755 793h1v1h-1z M757 791h1v1h-1z M759 789h1v1h-1z M759 793h1v1h-1z M761 791h1v1h-1z M763 789h1v1h-1z M763 793h1v1h-1z M765 791h1v1h-1z M767 789h1v1h-1z M767 793h1v1h-1z M769 791h1v1h-1z M771 789h1v1h-1z M771 793h1v1h-1z M773 791h1v1h-1z M775 789h1v1h-1z M775 793h1v1h-1z M777 791h1v1h-1z M779 789h1v1h-1z M779 793h1v1h-1z M781 791h1v1h-1z M783 789h1v1h-1z M783 793h1v1h-1z M785 791h1v1h-1z M787 789h1v1h-1z M787 793h1v1h-1z M789 791h1v1h-1z M791 789h1v1h-1z M791 793h1v1h-1z M793 791h1v1h-1z M795 789h1v1h-1z M795 793h1v1h-1z M797 791h1v1h-1z M799 789h1v1h-1z M799 793h1v1h-1z M801 791h1v1h-1z M803 789h1v1h-1z M803 793h1v1h-1z M805 791h1v1h-1z M807 789h1v1h-1z M807 793h1v1h-1z M809 791h1v1h-1z M811 789h1v1h-1z M811 793h1v1h-1z M813 791h1v1h-1z M815 789h1v1h-1z M815 793h1v1h-1z M817 791h1v1h-1z M819 789h1v1h-1z M819 793h1v1h-1z M821 791h1v1h-1z M823 789h1v1h-1z M823 793h1v1h-1z M825 791h1v1h-1z M827 789h1v1h-1z M827 793h1v1h-1z M829 791h1v1h-1z M831 789h1v1h-1z M831 793h1v1h-1z M833 791h1v1h-1z M835 789h1v1h-1z M835 793h1v1h-1z M837 791h1v1h-1z M839 789h1v1h-1z M839 793h1v1h-1z M841 791h1v1h-1z M843 789h1v1h-1z M843 793h1v1h-1z M845 791h1v1h-1z M847 789h1v1h-1z M847 793h1v1h-1z M849 791h1v1h-1z M851 789h1v1h-1z M851 793h1v1h-1z M853 791h1v1h-1z M855 789h1v1h-1z M855 793h1v1h-1z M857 791h1v1h-1z M859 789h1v1h-1z M859 793h1v1h-1z M861 791h1v1h-1z M863 789h1v1h-1z M863 793h1v1h-1z M865 791h1v1h-1z M867 789h1v1h-1z M867 793h1v1h-1z M869 791h1v1h-1z M871 789h1v1h-1z M871 793h1v1h-1z M873 791h1v1h-1z M875 789h1v1h-1z M875 793h1v1h-1z M877 791h1v1h-1z M879 789h1v1h-1z M879 793h1v1h-1z M881 791h1v1h-1z M883 789h1v1h-1z M883 793h1v1h-1z M885 791h1v1h-1z M887 789h1v1h-1z M887 793h1v1h-1z M889 791h1v1h-1z M891 789h1v1h-1z M891 793h1v1h-1z M893 791h1v1h-1z M895 789h1v1h-1z M895 793h1v1h-1z M897 791h1v1h-1z M899 789h1v1h-1z M899 793h1v1h-1z M901 791h1v1h-1z M903 789h1v1h-1z M903 793h1v1h-1z M905 791h1v1h-1z M907 789h1v1h-1z M907 793h1v1h-1z M909 791h1v1h-1z M911 789h1v1h-1z M911 793h1v1h-1z M913 791h1v1h-1z M915 789h1v1h-1z M915 793h1v1h-1z M917 791h1v1h-1z M919 789h1v1h-1z M919 793h1v1h-1z M921 791h1v1h-1z M923 789h1v1h-1z M923 793h1v1h-1z M925 791h1v1h-1z M927 789h1v1h-1z M927 793h1v1h-1z M929 791h1v1h-1z M931 789h1v1h-1z M931 793h1v1h-1z M933 791h1v1h-1z M935 789h1v1h-1z M935 793h1v1h-1z M937 791h1v1h-1z M939 789h1v1h-1z M939 793h1v1h-1z M941 791h1v1h-1z M943 789h1v1h-1z M943 793h1v1h-1z M945 791h1v1h-1z M947 789h1v1h-1z M947 793h1v1h-1z M949 791h1v1h-1z M951 789h1v1h-1z M951 793h1v1h-1z M953 791h1v1h-1z M955 789h1v1h-1z M955 793h1v1h-1z M957 791h1v1h-1z M959 789h1v1h-1z M959 793h1v1h-1z M961 791h1v1h-1z M963 789h1v1h-1z M963 793h1v1h-1z M965 791h1v1h-1z"/></svg>
<svg style="left:974px;top:788px" width="9" height="6"><path d="M0 0.5 H8 L4 5Z" fill="#fff"/></svg>
<svg style="left:990px;top:786px" width="8" height="12" viewBox="0 0 8 12"><path d="M2 0.5 H6 V7 M2 0.5 V7 M0 7.5 H8 M4 7.5 V11.5 M5 1 V7" stroke="#fff" stroke-width="1.2" fill="none"/></svg>
<svg style="left:1006px;top:787px" width="11" height="10" viewBox="0 0 11 10"><path d="M0.7 0.5 L10.3 9.5 M10.3 0.5 L0.7 9.5" stroke="#fff" stroke-width="1.5"/></svg>
<div style="left:32px;top:802px;width:991px;height:26px;background:#2D2D30;"></div>
<svg style="left:41px;top:808px" width="14" height="15" viewBox="0 0 14 15"><path d="M0.5 0.5 L7.5 7 M7 0.5 L0.5 7" stroke="#555" stroke-width="1.3"/><path d="M8 1.5 H13 M8 5 H13 M1 8.5 H13 M1 12.5 H13" stroke="#555" stroke-width="1.8"/></svg>
<div style="left:62px;top:806px;width:1px;height:18px;background:#46464A;"></div>
<svg style="left:71px;top:808px" width="13" height="14" viewBox="0 0 13 14"><path d="M1 3.5 H7 M3.8 0.8 L1 3.5 L3.8 6.2" stroke="#555" stroke-width="1.6" fill="none"/><path d="M6 6 H12 M2 8.5 H12 M2 11.5 H12" stroke="#555" stroke-width="1.3"/></svg>
<svg style="left:93px;top:808px" width="13" height="14" viewBox="0 0 13 14"><path d="M0.5 3.5 H7 M4.2 0.8 L7 3.5 L4.2 6.2" stroke="#555" stroke-width="1.6" fill="none"/><path d="M6 6 H12 M2 8.5 H12 M2 11.5 H12" stroke="#555" stroke-width="1.3"/></svg>
<div style="left:32px;top:828px;width:991px;height:106px;background:#252526;"></div>
<div style="left:31px;top:934px;width:992px;height:1px;background:#3F3F46;"></div>
<div style="left:1022px;top:781px;width:1px;height:154px;background:#3F3F46;"></div>
<div style="left:36px;top:937px;color:#F1F1F1;font-size:12px;line-height:16px;white-space:pre;">Иерархия вызовов</div>
<div style="left:148px;top:937px;color:#F1F1F1;font-size:12px;line-height:16px;white-space:pre;">Список ошибок</div>
<div style="left:242px;top:934px;width:166px;height:21px;background:#252526;border:1px solid #3F3F46;border-top:none"></div>
<div style="left:248px;top:937px;color:#0097FB;font-size:12px;line-height:16px;white-space:pre;">Результаты поиска символа</div>
<div style="left:1029px;top:85px;width:246px;height:517px;background:#2D2D30;border:1px solid #3F3F46"></div>
<div style="left:1034px;top:89px;color:#F1F1F1;font-size:12px;line-height:16px;white-space:pre;">Обозреватель решений</div>
<svg style="left:0;top:0" width="1280" height="1024"><path fill="#46464A" d="M1173 93h1v1h-1z M1173 97h1v1h-1z M1175 95h1v1h-1z M1177 93h1v1h-1z M1177 97h1v1h-1z M1179 95h1v1h-1z M1181 93h1v1h-1z M1181 97h1v1h-1z M1183 95h1v1h-1z M1185 93h1v1h-1z M1185 97h1v1h-1z M1187 95h1v1h-1z M1189 93h1v1h-1z M1189 97h1v1h-1z M1191 95h1v1h-1z M1193 93h1v1h-1z M1193 97h1v1h-1z M1195 95h1v1h-1z M1197 93h1v1h-1z M1197 97h1v1h-1z M1199 95h1v1h-1z M1201 93h1v1h-1z M1201 97h1v1h-1z M1203 95h1v1h-1z M1205 93h1v1h-1z M1205 97h1v1h-1z M1207 95h1v1h-1z M1209 93h1v1h-1z M1209 97h1v1h-1z M1211 95h1v1h-1z M1213 93h1v1h-1z M1213 97h1v1h-1z M1215 95h1v1h-1z M1217 93h1v1h-1z M1217 97h1v1h-1z M1219 95h1v1h-1z"/></svg>
<svg style="left:1227px;top:93px" width="9" height="6"><path d="M0 0.5 H8 L4 5Z" fill="#F1F1F1"/></svg>
<svg style="left:1243px;top:91px" width="8" height="12" viewBox="0 0 8 12"><path d="M2 0.5 H6 V7 M2 0.5 V7 M0 7.5 H8 M4 7.5 V11.5 M5 1 V7" stroke="#F1F1F1" stroke-width="1.2" fill="none"/></svg>
<svg style="left:1258px;top:91px" width="11" height="10" viewBox="0 0 11 10"><path d="M0.7 0.5 L10.3 9.5 M10.3 0.5 L0.7 9.5" stroke="#F1F1F1" stroke-width="1.5"/></svg>
<svg style="left:1038px;top:115px" width="13" height="13" viewBox="0 0 13 13"><circle cx="6.5" cy="6.5" r="6" fill="#555"/><path d="M3 6.5 H10 M6 3.5 L3 6.5 L6 9.5" stroke="#2D2D30" stroke-width="1.8" fill="none"/></svg>
<svg style="left:1061px;top:115px" width="13" height="13" viewBox="0 0 13 13"><circle cx="6.5" cy="6.5" r="6" fill="#555"/><path d="M3 6.5 H10 M7 3.5 L10 6.5 L7 9.5" stroke="#2D2D30" stroke-width="1.8" fill="none"/></svg>
<svg style="left:1082px;top:114px" width="15" height="15" viewBox="0 0 15 15"><path d="M1 7.5 L7 1.5 L13 7.5 M2.5 6.5 V14 H12 V6.5 M11 1 V4.5" stroke="#F1F1F1" stroke-width="1.3" fill="none"/><rect x="6" y="9" width="3" height="5" fill="#C8C8C8"/></svg>
<div style="left:1104px;top:111px;width:1px;height:20px;background:#46464A;"></div>
<svg style="left:1113px;top:113px" width="18" height="16" viewBox="0 0 18 16"><path d="M0.5 1 H6 L3.3 3.5Z" fill="#F1F1F1"/><path d="M3.3 2 V5" stroke="#F1F1F1"/><circle cx="9.5" cy="9.5" r="5" stroke="#F1F1F1" stroke-width="1.2" fill="none"/><path d="M9.5 6.5 V9.8 H12" stroke="#F1F1F1" stroke-width="1.1" fill="none"/></svg>
<svg style="left:1134px;top:120px" width="7" height="4"><path d="M0 0 H6 L3 3.5Z" fill="#999"/></svg>
<svg style="left:1148px;top:114px" width="13" height="14" viewBox="0 0 13 14"><path d="M1.5 4 H12 M4.5 1 L1.5 4 L4.5 7 M1 10 H11.5 M8.5 7 L11.5 10 L8.5 13" stroke="#DDDDDD" stroke-width="1.5" fill="none"/></svg>
<svg style="left:1169px;top:114px" width="14" height="15" viewBox="0 0 14 15"><path d="M10.5 5 A5 5 0 1 1 6.5 3.5" stroke="#75BEFF" stroke-width="2.2" fill="none"/><path d="M6 0 L10 3.5 L6 6.5Z" fill="#75BEFF"/></svg>
<svg style="left:1192px;top:114px" width="13" height="13" viewBox="0 0 13 13"><path d="M4 3 V1 H12 V8.5 H10.5 M2.5 4.5 V3 H10.5 V10 H8.5" stroke="#DDD" stroke-width="1.1" fill="none"/><rect x="0.5" y="4.5" width="8" height="7.5" stroke="#DDD" stroke-width="1.1" fill="none"/><path d="M2.5 8 H6.5" stroke="#75BEFF" stroke-width="1.3"/></svg>
<svg style="left:1212px;top:114px" width="15" height="15" viewBox="0 0 15 15"><path d="M4 1 H0.5 V10.5 H2 M2.5 3.5 V13 M3 1 H8 L10 3" stroke="#DDD" stroke-width="1.1" fill="none"/><path d="M3.5 4 H10.5 L14 7.5 V14.5 H3.5Z" stroke="#DDD" stroke-width="1.1" fill="none"/><path d="M6 8 H11 M6 10.5 H11 M6 12.5 H10" stroke="#DDD" stroke-width="1"/></svg>
<div style="left:1235px;top:111px;width:1px;height:20px;background:#46464A;"></div>
<svg style="left:1266px;top:111px" width="7" height="5"><path d="M0 0 L2.5 2 L0 4Z M4 0 L6.5 2 L4 4Z" fill="#999"/></svg>
<div style="left:1030px;top:135px;width:244px;height:21px;background:#333337;border-top:1px solid #3F3F46;border-bottom:1px solid #3F3F46;border-left:1px solid #3A3A40"></div>
<div style="left:1262px;top:136px;width:12px;height:19px;background:#3F3F46;"></div>
<div style="left:1035px;top:138px;width:203px;height:16px;overflow:hidden;white-space:pre;color:#999999;line-height:16px">Обозреватель решений — поиск (Ctrl+;)</div>
<svg style="left:1246px;top:139px" width="14" height="13" viewBox="0 0 14 13"><circle cx="8.8" cy="5" r="3.8" stroke="#eee" stroke-width="1.8" fill="none"/><path d="M6.2 7.6 L1.5 12" stroke="#eee" stroke-width="2.4"/></svg>
<svg style="left:1264px;top:143px" width="7" height="4"><path d="M0 0 H6 L3 3.5Z" fill="#F1F1F1"/></svg>
<div style="left:1030px;top:156px;width:244px;height:445px;background:#252526;"></div>
<div style="left:1030px;top:156px;width:244px;height:4px;background:#28282A;"></div>
<div style="left:1030px;top:160px;width:244px;height:19px;background:#3F3F46;"></div>
<svg style="left:1042px;top:162px" width="16" height="16" viewBox="0 0 16 16"><path d="M1.5 1 H14.5 V13.5 H7" stroke="#C8C8C8" stroke-width="1" fill="none"/><rect x="1" y="0.5" width="14" height="2.5" fill="#C8C8C8"/><path d="M1.5 3 V7" stroke="#C8C8C8"/><rect x="2" y="3" width="12" height="10" fill="#1E1E1E"/><path transform="translate(0.3 7) scale(0.42)" fill-rule="evenodd" fill="#D97EE6" d="M15 0 L20 2.3 V18.7 L15 21 L5.5 12.6 L2 15.5 L0 14.5 V6.5 L2 5.5 L5.5 8.4 Z M15 6 L9.2 10.5 L15 15 Z M2.2 8.2 V12.8 L4.6 10.5 Z"/></svg>
<div style="left:1063px;top:162px;color:#F1F1F1;font-size:12px;line-height:16px;white-space:pre;">Решение &quot;nt use&quot;  (проектов: 1)</div>
<svg style="left:1041px;top:185px" width="7" height="7"><path d="M6.5 0 V6.5 H0Z" fill="#F1F1F1"/></svg>
<svg style="left:1061px;top:182px" width="15" height="13" viewBox="0 0 15 13"><rect x="0.5" y="0.5" width="14" height="12" stroke="#89D185" fill="#1E1E1E"/><path d="M6.3 3.5 C5.8 3 5.3 2.8 4.6 2.8 C3.3 2.8 2.5 3.9 2.5 6.3 C2.5 8.6 3.3 9.6 4.6 9.6 C5.3 9.6 5.8 9.4 6.3 9" stroke="#ccc" stroke-width="1" fill="none"/><path d="M8 5 H12.5 M8 7.3 H12.5 M9.5 3 V9.5 M11.2 3 V9.5" stroke="#ccc" stroke-width="1"/></svg>
<div style="left:1081px;top:180px;color:#F1F1F1;font-size:12px;line-height:16px;white-space:pre;font-weight:bold">nt use</div>
<svg style="left:1059px;top:200px" width="6" height="10" viewBox="0 0 6 10"><path d="M0.6 0.8 L5.2 5 L0.6 9.2Z" stroke="#F1F1F1" stroke-width="1.1" fill="none"/></svg>
<div style="left:1079px;top:203px;width:4px;height:5px;background:#C8C8C8;"></div>
<div style="left:1083px;top:205px;width:3px;height:1px;background:#C8C8C8;"></div>
<div style="left:1087px;top:202px;width:6px;height:7px;background:#C8C8C8;"></div>
<div style="left:1099px;top:198px;color:#F1F1F1;font-size:12px;line-height:16px;white-space:pre;">Ссылки</div>
<svg style="left:1059px;top:218px" width="6" height="10" viewBox="0 0 6 10"><path d="M0.6 0.8 L5.2 5 L0.6 9.2Z" stroke="#F1F1F1" stroke-width="1.1" fill="none"/></svg>
<svg style="left:1080px;top:218px" width="14" height="11" viewBox="0 0 14 11"><path d="M0 1 H5 L6 0 H13 V11 H0Z" fill="#DCB67A"/><path d="M5.5 2 H13" stroke="#252526" stroke-width="0.8"/></svg>
<div style="left:1099px;top:216px;color:#F1F1F1;font-size:12px;line-height:16px;white-space:pre;">aR3nbf8dQp2feLmk31</div>
<svg style="left:1059px;top:236px" width="6" height="10" viewBox="0 0 6 10"><path d="M0.6 0.8 L5.2 5 L0.6 9.2Z" stroke="#F1F1F1" stroke-width="1.1" fill="none"/></svg>
<svg style="left:1080px;top:236px" width="14" height="11" viewBox="0 0 14 11"><path d="M0 1 H5 L6 0 H13 V11 H0Z" fill="#DCB67A"/><path d="M5.5 2 H13" stroke="#252526" stroke-width="0.8"/></svg>
<div style="left:1099px;top:234px;color:#F1F1F1;font-size:12px;line-height:16px;white-space:pre;">nt_use</div>
<svg style="left:1081px;top:256px" width="12" height="8" viewBox="0 0 14 9"><path d="M5.8 1.8 C5.2 1 4.5 0.9 3.6 0.9 C2 0.9 1 2.2 1 4.5 C1 6.8 2 8.1 3.6 8.1 C4.5 8.1 5.2 7.9 5.8 7.2" stroke="#89D185" stroke-width="1.9" fill="none"/><path d="M7.5 2.8 H13 M7.5 5.2 H13 M9.2 0.5 V7 M11.4 0.5 V7" stroke="#89D185" stroke-width="1.2"/></svg>
<div style="left:1099px;top:252px;color:#F1F1F1;font-size:12px;line-height:16px;white-space:pre;">AssemblyInfo.cs</div>
<svg style="left:1059px;top:272px" width="6" height="10" viewBox="0 0 6 10"><path d="M0.6 0.8 L5.2 5 L0.6 9.2Z" stroke="#F1F1F1" stroke-width="1.1" fill="none"/></svg>
<svg style="left:1081px;top:274px" width="12" height="8" viewBox="0 0 14 9"><path d="M5.8 1.8 C5.2 1 4.5 0.9 3.6 0.9 C2 0.9 1 2.2 1 4.5 C1 6.8 2 8.1 3.6 8.1 C4.5 8.1 5.2 7.9 5.8 7.2" stroke="#89D185" stroke-width="1.9" fill="none"/><path d="M7.5 2.8 H13 M7.5 5.2 H13 M9.2 0.5 V7 M11.4 0.5 V7" stroke="#89D185" stroke-width="1.2"/></svg>
<div style="left:1099px;top:270px;color:#F1F1F1;font-size:12px;line-height:16px;white-space:pre;letter-spacing:-0.5px">Class0.cs</div>
<svg style="left:1059px;top:290px" width="6" height="10" viewBox="0 0 6 10"><path d="M0.6 0.8 L5.2 5 L0.6 9.2Z" stroke="#F1F1F1" stroke-width="1.1" fill="none"/></svg>
<svg style="left:1081px;top:292px" width="12" height="8" viewBox="0 0 14 9"><path d="M5.8 1.8 C5.2 1 4.5 0.9 3.6 0.9 C2 0.9 1 2.2 1 4.5 C1 6.8 2 8.1 3.6 8.1 C4.5 8.1 5.2 7.9 5.8 7.2" stroke="#89D185" stroke-width="1.9" fill="none"/><path d="M7.5 2.8 H13 M7.5 5.2 H13 M9.2 0.5 V7 M11.4 0.5 V7" stroke="#89D185" stroke-width="1.2"/></svg>
<div style="left:1099px;top:288px;color:#F1F1F1;font-size:12px;line-height:16px;white-space:pre;letter-spacing:-0.5px">Class1.cs</div>
<svg style="left:1059px;top:308px" width="6" height="10" viewBox="0 0 6 10"><path d="M0.6 0.8 L5.2 5 L0.6 9.2Z" stroke="#F1F1F1" stroke-width="1.1" fill="none"/></svg>
<svg style="left:1081px;top:310px" width="12" height="8" viewBox="0 0 14 9"><path d="M5.8 1.8 C5.2 1 4.5 0.9 3.6 0.9 C2 0.9 1 2.2 1 4.5 C1 6.8 2 8.1 3.6 8.1 C4.5 8.1 5.2 7.9 5.8 7.2" stroke="#89D185" stroke-width="1.9" fill="none"/><path d="M7.5 2.8 H13 M7.5 5.2 H13 M9.2 0.5 V7 M11.4 0.5 V7" stroke="#89D185" stroke-width="1.2"/></svg>
<div style="left:1099px;top:306px;color:#F1F1F1;font-size:12px;line-height:16px;white-space:pre;letter-spacing:-0.5px">Class2.cs</div>
<svg style="left:1059px;top:326px" width="6" height="10" viewBox="0 0 6 10"><path d="M0.6 0.8 L5.2 5 L0.6 9.2Z" stroke="#F1F1F1" stroke-width="1.1" fill="none"/></svg>
<svg style="left:1081px;top:328px" width="12" height="8" viewBox="0 0 14 9"><path d="M5.8 1.8 C5.2 1 4.5 0.9 3.6 0.9 C2 0.9 1 2.2 1 4.5 C1 6.8 2 8.1 3.6 8.1 C4.5 8.1 5.2 7.9 5.8 7.2" stroke="#89D185" stroke-width="1.9" fill="none"/><path d="M7.5 2.8 H13 M7.5 5.2 H13 M9.2 0.5 V7 M11.4 0.5 V7" stroke="#89D185" stroke-width="1.2"/></svg>
<div style="left:1099px;top:324px;color:#F1F1F1;font-size:12px;line-height:16px;white-space:pre;">Mutation.cs</div>
<div style="left:1029px;top:601px;width:246px;height:8px;background:#3F3F46;"></div>
<div style="left:1029px;top:609px;width:246px;height:346px;background:#2D2D30;border:1px solid #3F3F46;border-top:none"></div>
<div style="left:1034px;top:612px;color:#F1F1F1;font-size:12px;line-height:16px;white-space:pre;">Свойства</div>
<svg style="left:0;top:0" width="1280" height="1024"><path fill="#46464A" d="M1093 617h1v1h-1z M1093 621h1v1h-1z M1095 619h1v1h-1z M1097 617h1v1h-1z M1097 621h1v1h-1z M1099 619h1v1h-1z M1101 617h1v1h-1z M1101 621h1v1h-1z M1103 619h1v1h-1z M1105 617h1v1h-1z M1105 621h1v1h-1z M1107 619h1v1h-1z M1109 617h1v1h-1z M1109 621h1v1h-1z M1111 619h1v1h-1z M1113 617h1v1h-1z M1113 621h1v1h-1z M1115 619h1v1h-1z M1117 617h1v1h-1z M1117 621h1v1h-1z M1119 619h1v1h-1z M1121 617h1v1h-1z M1121 621h1v1h-1z M1123 619h1v1h-1z M1125 617h1v1h-1z M1125 621h1v1h-1z M1127 619h1v1h-1z M1129 617h1v1h-1z M1129 621h1v1h-1z M1131 619h1v1h-1z M1133 617h1v1h-1z M1133 621h1v1h-1z M1135 619h1v1h-1z M1137 617h1v1h-1z M1137 621h1v1h-1z M1139 619h1v1h-1z M1141 617h1v1h-1z M1141 621h1v1h-1z M1143 619h1v1h-1z M1145 617h1v1h-1z M1145 621h1v1h-1z M1147 619h1v1h-1z M1149 617h1v1h-1z M1149 621h1v1h-1z M1151 619h1v1h-1z M1153 617h1v1h-1z M1153 621h1v1h-1z M1155 619h1v1h-1z M1157 617h1v1h-1z M1157 621h1v1h-1z M1159 619h1v1h-1z M1161 617h1v1h-1z M1161 621h1v1h-1z M1163 619h1v1h-1z M1165 617h1v1h-1z M1165 621h1v1h-1z M1167 619h1v1h-1z M1169 617h1v1h-1z M1169 621h1v1h-1z M1171 619h1v1h-1z M1173 617h1v1h-1z M1173 621h1v1h-1z M1175 619h1v1h-1z M1177 617h1v1h-1z M1177 621h1v1h-1z M1179 619h1v1h-1z M1181 617h1v1h-1z M1181 621h1v1h-1z M1183 619h1v1h-1z M1185 617h1v1h-1z M1185 621h1v1h-1z M1187 619h1v1h-1z M1189 617h1v1h-1z M1189 621h1v1h-1z M1191 619h1v1h-1z M1193 617h1v1h-1z M1193 621h1v1h-1z M1195 619h1v1h-1z M1197 617h1v1h-1z M1197 621h1v1h-1z M1199 619h1v1h-1z M1201 617h1v1h-1z M1201 621h1v1h-1z M1203 619h1v1h-1z M1205 617h1v1h-1z M1205 621h1v1h-1z M1207 619h1v1h-1z M1209 617h1v1h-1z M1209 621h1v1h-1z M1211 619h1v1h-1z M1213 617h1v1h-1z M1213 621h1v1h-1z M1215 619h1v1h-1z M1217 617h1v1h-1z M1217 621h1v1h-1z M1219 619h1v1h-1z"/></svg>
<svg style="left:1227px;top:617px" width="9" height="6"><path d="M0 0.5 H8 L4 5Z" fill="#F1F1F1"/></svg>
<svg style="left:1243px;top:615px" width="8" height="12" viewBox="0 0 8 12"><path d="M2 0.5 H6 V7 M2 0.5 V7 M0 7.5 H8 M4 7.5 V11.5 M5 1 V7" stroke="#F1F1F1" stroke-width="1.2" fill="none"/></svg>
<svg style="left:1258px;top:615px" width="11" height="10" viewBox="0 0 11 10"><path d="M0.7 0.5 L10.3 9.5 M10.3 0.5 L0.7 9.5" stroke="#F1F1F1" stroke-width="1.5"/></svg>
<div style="left:1030px;top:630px;width:244px;height:23px;background:#333337;"></div>
<svg style="left:1264px;top:641px" width="7" height="4"><path d="M0 0 H6 L3 3.5Z" fill="#F1F1F1"/></svg>
<div style="left:1030px;top:653px;width:244px;height:27px;background:#2D2D30;"></div>
<div style="left:1033px;top:656px;width:23px;height:22px;background:#2D2D30;border:1px solid #3399FF"></div>
<svg style="left:1037px;top:659px" width="15" height="16" viewBox="0 0 15 16"><rect x="0.5" y="0.5" width="5" height="5" fill="#DDD"/><rect x="0.5" y="9.5" width="5" height="5" fill="#DDD"/><path d="M1.5 3 H4.5 M3 1.5 V4.5 M1.5 12 H4.5 M3 10.5 V13.5" stroke="#2D2D30"/><path d="M7 1 H14 M7 3.5 H14 M7 6 H14 M7 10 H14 M7 12.5 H14 M7 15 H14" stroke="#DDD" stroke-width="1"/></svg>
<svg style="left:1059px;top:659px" width="17" height="16" viewBox="0 0 17 16"><text x="0" y="7" font-family="Liberation Sans" font-weight="bold" font-size="7.5" fill="#DDD">A</text><text x="0.5" y="15" font-family="Liberation Sans" font-weight="bold" font-size="7.5" fill="#DDD">Z</text><path d="M12 2 V13 M8.5 9.5 L12 13.5 L15.5 9.5" stroke="#75BEFF" stroke-width="1.8" fill="none"/></svg>
<div style="left:1082px;top:660px;width:1px;height:18px;background:#46464A;"></div>
<svg style="left:1089px;top:659px" width="14" height="14" viewBox="0 0 14 14"><path d="M1.5 12.5 L7 7" stroke="#555" stroke-width="2.6"/><circle cx="9" cy="5" r="4" fill="#555"/><path d="M9 4.5 L12 1.5" stroke="#2D2D30" stroke-width="2"/></svg>
<div style="left:1030px;top:680px;width:244px;height:274px;background:#252526;"></div>
<div style="left:1030px;top:891px;width:244px;height:1px;background:#333337;"></div>
<div style="left:0px;top:961px;width:1280px;height:23px;background:#007ACC;"></div>
<div style="left:5px;top:965px;color:#FFFFFF;font-size:12px;line-height:16px;white-space:pre;">Готово</div>
<svg style="left:1145px;top:967px" width="10" height="13" viewBox="0 0 10 13"><path d="M5 1 L9 5.5 V8 L6 4.8 V12 H4 V4.8 L1 8 V5.5 Z" fill="#E8DFD6"/></svg>
<div style="left:1164px;top:965px;color:#FFFFFF;font-size:12px;line-height:16px;white-space:pre;">Опубликовать</div>
<svg style="left:1249px;top:969px" width="9" height="6"><path d="M0 5.5 H8 L4 0.5Z" fill="#fff"/></svg>
<div style="left:0px;top:984px;width:1280px;height:40px;background:#050508;"></div>
<svg style="left:16px;top:996px" width="17" height="17" viewBox="0 0 17 17"><path d="M0 2.3 L6.8 1.4 V7.9 H0Z M7.8 1.2 L16.5 0 V7.9 H7.8Z M0 8.9 H6.8 V15.5 L0 14.6Z M7.8 8.9 H16.5 V17 L7.8 15.8Z" fill="#fff"/></svg>
<svg style="left:63px;top:995px" width="18" height="18" viewBox="0 0 18 18"><circle cx="11" cy="7" r="5.6" stroke="#fff" stroke-width="1.3" fill="none"/><path d="M7 11 L1 17" stroke="#fff" stroke-width="1.4"/></svg>
<svg style="left:100px;top:986px" width="44" height="36" viewBox="0 0 44 36"><path d="M16.3 11.5 C16 7 18.5 6 20.5 6.3 C22.5 6.5 24 8 25.5 10 M18.8 11 C19 8.5 20 7.2 21.5 7.2 C23 7.3 24.5 8.5 25.5 10" stroke="#fff" stroke-width="1.1" fill="none"/><path fill-rule="evenodd" fill="#fff" d="M12 12.3 L33 10.2 V29.2 L12 26.7 Z M15.1 15.6 L18.8 15.1 V18.6 H15.1 Z M20.2 14.9 L26 14.1 V18.6 H20.2 Z M15.1 20.2 H18.8 V23.7 L15.1 23.2 Z M20.2 20.2 H26 V24.9 L20.2 24 Z"/></svg>
<svg style="left:161px;top:995px" width="22" height="18" viewBox="0 0 22 18"><path d="M0 1 H7 L8 2 H21.5 V18 H0Z" fill="#F8D775"/><path d="M0 1 H7 L8 2.5 H0Z" fill="#E8B84A"/><path d="M4.5 10 H17 V18 H13 V13.5 H8.5 V18 H4.5Z" fill="#2FA7E8"/></svg>
<div style="left:152px;top:1022px;width:31px;height:2px;background:#76B9ED;"></div>
<div style="left:183px;top:1022px;width:9px;height:2px;background:#4E7FA8;"></div>
<svg style="left:210px;top:993px" width="22" height="22" viewBox="0 0 22 22"><defs><linearGradient id="stg" x1="0" y1="0" x2="0" y2="1"><stop offset="0" stop-color="#14214A"/><stop offset="1" stop-color="#1B6FB0"/></linearGradient></defs><circle cx="11" cy="11" r="11" fill="url(#stg)"/><circle cx="14.5" cy="7.5" r="4" stroke="#ddd" stroke-width="1.5" fill="none"/><circle cx="14.5" cy="7.5" r="2" fill="#aaa"/><path d="M0.3 12 L6 14.5 L11.5 10" stroke="#ddd" stroke-width="2.2" fill="none"/><circle cx="7.5" cy="15" r="2.8" fill="#ddd"/></svg>
<svg style="left:258px;top:992px" width="24" height="23" viewBox="0 0 24 23"><rect x="0.5" y="0.5" width="23" height="22" fill="#BF0000" stroke="#8A0000" stroke-dasharray="1 1"/><path d="M5 18 L8 4.5 H15 M6.2 11 H11.5 M12 11 H19 L12 18 H19" stroke="#fff" stroke-width="2.4" fill="none"/></svg>
<svg style="left:307px;top:992px" width="24" height="24" viewBox="0 0 24 24"><defs><radialGradient id="ffg" cx="0.75" cy="0.45" r="0.85"><stop offset="0" stop-color="#FFE94A"/><stop offset="0.35" stop-color="#FFB21E"/><stop offset="0.7" stop-color="#F2641F"/><stop offset="1" stop-color="#D6361C"/></radialGradient><linearGradient id="ffb" x1="0" y1="0" x2="0" y2="1"><stop offset="0" stop-color="#62CBF6"/><stop offset="0.6" stop-color="#1E7FD0"/><stop offset="1" stop-color="#163F8F"/></linearGradient></defs><circle cx="12" cy="12" r="11.2" fill="url(#ffg)"/><circle cx="13.3" cy="10.2" r="8.6" fill="url(#ffb)"/><path d="M20.5 4.5 C23 7.5 23.5 13 21.5 16.5" stroke="#FFE35A" stroke-width="2.2" fill="none"/><path d="M1 11 C1 8 1.8 5.5 2.8 3.8 L4.6 6.5 C6.5 5.8 8.8 6.2 10 7.8 C9.2 8.5 8 8.8 7.6 10 C7.2 11.5 8.2 13.2 10.5 14.2 C12.5 15 14.5 14.5 16.2 13.5 C15 17 11 18.5 7.5 17.5 C3.5 16.5 1 13.8 1 11 Z" fill="#EC6A24"/></svg>
<div style="left:298px;top:1022px;width:40px;height:2px;background:#76B9ED;"></div>
<svg style="left:346px;top:988px" width="44" height="32" viewBox="0 0 44 32"><defs><linearGradient id="dpt" x1="0" y1="0" x2="1" y2="0"><stop offset="0" stop-color="#EE4AE8"/><stop offset="1" stop-color="#12D8F6"/></linearGradient><linearGradient id="dpl" x1="0" y1="0" x2="0" y2="1"><stop offset="0" stop-color="#9D5CF0"/><stop offset="0.5" stop-color="#E94AE6"/><stop offset="1" stop-color="#1FB8F5"/></linearGradient></defs><path d="M15 6.2 L31.6 4.1 L32.3 11.3 H15.1Z" fill="url(#dpt)"/><path d="M28.5 11 L34 14.8 L32 22.2 L28.5 23.4Z" fill="#B35AF0"/><path d="M10 11.2 L15.1 10.6 V23.4 L14.2 27.8 L11.2 20Z" fill="url(#dpl)"/><path d="M14 23 H26.8 V26 L14.5 27.8Z" fill="#20C4F4"/><rect x="15.1" y="8.2" width="13.4" height="15.2" fill="#0E0A1E"/><text x="15.8" y="16.2" font-family="Liberation Sans" font-weight="bold" font-size="8.2" fill="#fff">DP</text><rect x="16.1" y="20.1" width="4.9" height="1.7" fill="#fff"/></svg>
<div style="left:347px;top:1022px;width:41px;height:2px;background:#76B9ED;"></div>
<div style="left:393px;top:984px;width:48px;height:40px;background:#333337;"></div>
<svg style="left:392px;top:984px" width="49" height="40" viewBox="0 0 49 40"><path fill="#68217A" d="M14.1 14.5 L18 12.9 L22.5 16.4 L30.5 8.2 L35.9 10.2 V31.8 H14.1 Z"/><path fill-rule="evenodd" fill="#fff" d="M31 9.8 L34.8 11.5 V27.5 L31 29.7 L22.5 22.3 L18 25 L15.2 23.6 V15.5 L18 14.3 L22.5 17.8 Z M26 19.7 L30.9 16 V24 Z M17.8 17.7 V22.5 L20.5 19.8 Z"/></svg>
<div style="left:393px;top:1022px;width:47px;height:2px;background:#76B9ED;"></div>
<svg style="left:446px;top:986px" width="44" height="36" viewBox="0 0 44 36"><path fill-rule="evenodd" fill="#C5E0F4" stroke="#7FB6DE" stroke-width="0.6" d="M9 22 C7 17 11 11 18 10.3 C25 9.6 30 13 29.8 18.5 C29.6 24 25 28 19 27.8 C16 27.7 14.5 26 14 24.8 C13.5 23.5 12.5 23.3 11.5 24 C10 25 9.3 24 9 22 Z M17.9 20.6 m-1.5 0 a1.5 1.5 0 1 0 3 0 a1.5 1.5 0 1 0 -3 0 Z"/><circle cx="12" cy="19" r="1.8" fill="#E43B30"/><circle cx="15.8" cy="15.1" r="1.8" fill="#3DB54A"/><circle cx="20.7" cy="13.7" r="2" fill="#F6AE1A"/><path d="M19.3 29.5 L26.5 12" stroke="#EC8A2A" stroke-width="1.8"/><path d="M26.3 12.3 L27.6 9.6" stroke="#999" stroke-width="1.2"/><path d="M25.8 7.2 L31.8 9.5 L28 11 Z" fill="#E8BE7C"/></svg>
<div style="left:446px;top:1022px;width:40px;height:2px;background:#76B9ED;"></div>
<svg style="left:1058px;top:999px" width="14" height="9"><path d="M1 8 L7 1.5 L13 8" stroke="#fff" stroke-width="1.3" fill="none"/></svg>
<svg style="left:1083px;top:998px" width="14" height="13" viewBox="0 0 14 13"><path d="M1 12 A11 11 0 0 1 12 1 M3.5 12 A8.5 8.5 0 0 1 12 3.5 M6 12 A6 6 0 0 1 12 6 M8.5 12 A3.5 3.5 0 0 1 12 8.5" stroke="#fff" stroke-width="1" fill="none"/><circle cx="12" cy="11.5" r="1.4" fill="#fff"/></svg>
<svg style="left:1104px;top:997px" width="18" height="14" viewBox="0 0 18 14"><path d="M0.7 4.5 H3.5 L8 0.8 V13.2 L3.5 9.5 H0.7Z" stroke="#fff" stroke-width="1.1" fill="none"/><path d="M10 4.5 C11 5.5 11 8.5 10 9.5 M12.3 2.8 C14 4.5 14 9.5 12.3 11.2 M14.6 1 C17.2 3.5 17.2 10.5 14.6 13" stroke="#fff" stroke-width="1.1" fill="none"/></svg>
<div style="left:1131px;top:996px;color:#FFFFFF;font-size:12px;line-height:16px;white-space:pre;letter-spacing:-0.8px">ENG</div>
<div style="left:1180px;top:987px;color:#FFFFFF;font-size:12px;line-height:16px;white-space:pre;letter-spacing:-0.9px">12:13</div>
<div style="left:1167px;top:1005px;color:#FFFFFF;font-size:12px;line-height:16px;white-space:pre;letter-spacing:-0.7px">20.06.2017</div>
<svg style="left:1238px;top:995px" width="26" height="27" viewBox="0 0 26 27"><path d="M1 1 H17 V14 H7 L5.5 15.5 V14 H1Z" fill="#fff"/><path d="M3.7 4.5 H12.5 M3.7 7.5 H12.5 M3.7 10.5 H9.5" stroke="#050508" stroke-width="1"/><circle cx="16.6" cy="16.4" r="8" fill="#2A2A2A" stroke="#8A8A8A" stroke-width="1"/><path d="M13.8 13.3 C14.3 12 15.5 11.6 16.7 11.6 C18.4 11.6 19.4 12.6 19.4 13.9 C19.4 15.6 17.5 16.8 14.1 19.6 H19.6" stroke="#fff" stroke-width="1.7" fill="none"/></svg>
<div style="left:1275px;top:984px;width:1px;height:40px;background:#555555;"></div>
</body></html>
